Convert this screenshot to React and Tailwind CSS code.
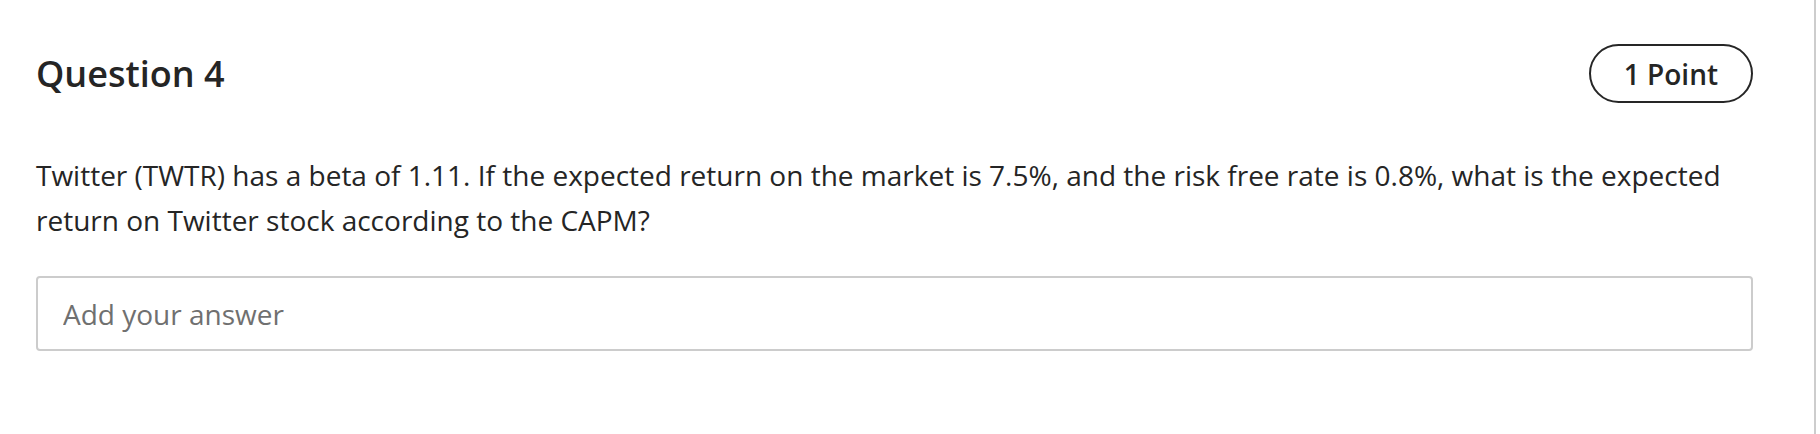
import React from 'react';

const App = () => {
    return (
        <div className="w-[1816px] h-[434px] bg-white border-r-2 border-[#cdcdcd] font-['Open_Sans',sans-serif] text-[#252525]">
            <div className="pl-[36px] pr-[61px] pt-[44px]">
                {/* Header */}
                <div className="flex justify-between items-center">
                    <h2 className="text-[36px] font-semibold leading-[49px]">Question 4</h2>
                    <div className="h-[59px] px-[33px] flex items-center border-2 border-[#262626] rounded-full text-[28px] font-semibold">
                        1 Point
                    </div>
                </div>

                {/* Question text */}
                <p className="mt-[50px] text-[28px] leading-[45px]">
                    Twitter (TWTR) has a beta of 1.11. If the expected return on the market is 7.5%, and the risk free rate is 0.8%, what is the expected return on Twitter stock according to the CAPM?
                </p>

                {/* Answer input */}
                <input
                    type="text"
                    placeholder="Add your answer"
                    className="mt-[33px] w-full h-[75px] px-[25px] border-2 border-[#cccccc] rounded-[4px] text-[28px] outline-none placeholder:text-[#707070]"
                />
            </div>
        </div>
    );
};

export default App;
